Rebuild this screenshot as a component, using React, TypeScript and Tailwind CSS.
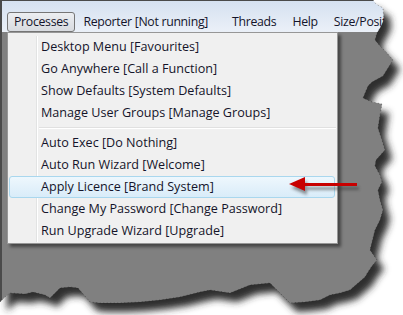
import React from "react";

const TORN =
  "373,0 376,4 383,8 384,20 380,28 377,33 375,40 380,46 386,52 393,60 388,68 383,76 372,82 368,86 363,98 372,102 382,104 380,115 378,128 382,140 385,150 376,160 375,166 380,175 382,182 378,190 380,200 383,210 380,220 375,230 372,242 370,250 377,260 372,266 368,272 365,277 350,290 340,293 330,295 320,300 305,302 290,303 282,295 270,283 250,285 230,293 210,290 200,292 180,297 160,300 140,302 120,303 100,303 90,302 78,288 70,287 60,288 50,298 45,295 33,292 25,294 10,293 5,297 0,302";
const SHAPE = "0,0 " + TORN;

const top = [
  "Desktop Menu [Favourites]",
  "Go Anywhere [Call a Function]",
  "Show Defaults [System Defaults]",
  "Manage User Groups [Manage Groups]",
];
const bottom = [
  "Auto Exec [Do Nothing]",
  "Auto Run Wizard [Welcome]",
  "Apply Licence [Brand System]",
  "Change My Password [Change Password]",
  "Run Upgrade Wizard [Upgrade]",
];

function Row({ label, active }: { label: string; active?: boolean }) {
  if (active) {
    return (
      <div className="h-[22px] mr-[1px] flex items-center rounded-[3px] border border-[#a9d7ee] bg-gradient-to-b from-[#eef7fd] to-[#d9ecf9]">
        <div className="w-[27px] h-full" />
        <div className="pl-[4px] whitespace-nowrap">{label}</div>
      </div>
    );
  }
  return (
    <div className="h-[22px] flex items-center">
      <div className="w-[28px] h-full border-r border-[#e2e3e3] shadow-[1px_0_0_#ffffff]" />
      <div className="pl-[4px] whitespace-nowrap">{label}</div>
    </div>
  );
}

export default function App() {
  return (
    <div className="relative w-[403px] h-[315px] overflow-hidden bg-white font-['Open_Sans',sans-serif] text-[#14142a]">
      <div className="flex flex-col w-full h-full bg-[#808080] border-l-2 border-t border-[#4a4a4a]">
        <div className="h-[31px] flex items-end pl-[5px] bg-gradient-to-b from-[#d5e1f0] to-[#ebf0f8] whitespace-nowrap text-[12.3px] tracking-[-0.3px]">
          <div className="h-[20px] px-[6px] flex items-center border border-[#767676] rounded-[3px] bg-gradient-to-b from-[#eceef1] to-[#d8dbe0]">
            Processes
          </div>
          <div className="h-[20px] pl-[8px] pr-[16px] flex items-center">Reporter [Not running]</div>
          <div className="h-[20px] px-[8px] flex items-center">Threads</div>
          <div className="h-[20px] px-[8px] flex items-center">Help</div>
          <div className="h-[20px] px-[8px] flex items-center">Size/Position</div>
        </div>
        <div className="ml-[5px] w-[331px] border border-[#979797] bg-[#f0f0f0] pt-[3px] pb-[1px] px-[1px] text-[12.6px] shadow-[3px_3px_3px_rgba(0,0,0,0.45)]">
          {top.map((l) => (
            <Row key={l} label={l} />
          ))}
          <div className="h-[8px] flex items-center">
            <div className="w-[28px] h-full border-r border-[#e2e3e3] shadow-[1px_0_0_#ffffff]" />
            <div className="flex-1 ml-[2px] h-[2px] border-t border-[#e0e0e0] border-b border-b-white" />
          </div>
          {bottom.map((l) => (
            <Row key={l} label={l} active={l.startsWith("Apply")} />
          ))}
        </div>
      </div>

      {/* red arrow annotation */}
      <svg className="absolute left-0 top-0" width="403" height="315">
        <defs>
          <filter id="ash" x="-20%" y="-50%" width="140%" height="200%">
            <feGaussianBlur stdDeviation="1.5" />
          </filter>
        </defs>
        <g transform="translate(2,4)" filter="url(#ash)" opacity="0.5">
          <polygon points="289,184 305,177 305,191" fill="#333" />
          <rect x="303" y="183" width="54" height="3" fill="#333" />
        </g>
        <polygon points="289,184 305,177 305,191" fill="#c80000" />
        <rect x="303" y="183" width="54" height="3" fill="#c80000" />
      </svg>

      {/* torn paper edge with shadow */}
      <svg className="absolute left-0 top-0" width="403" height="315">
        <defs>
          <mask id="outside">
            <rect width="403" height="315" fill="white" />
            <polygon points={SHAPE} fill="black" />
          </mask>
          <filter id="tblur" x="-10%" y="-10%" width="120%" height="120%">
            <feGaussianBlur stdDeviation="3.5" />
          </filter>
        </defs>
        <g mask="url(#outside)">
          <rect width="403" height="315" fill="white" />
          <polygon points={SHAPE} transform="translate(7,9)" fill="#2e2e2e" filter="url(#tblur)" />
        </g>
        <polyline points={TORN} fill="none" stroke="#1a1a1a" strokeWidth="0.7" strokeDasharray="1 2.5" opacity="0.6" />
      </svg>
    </div>
  );
}
